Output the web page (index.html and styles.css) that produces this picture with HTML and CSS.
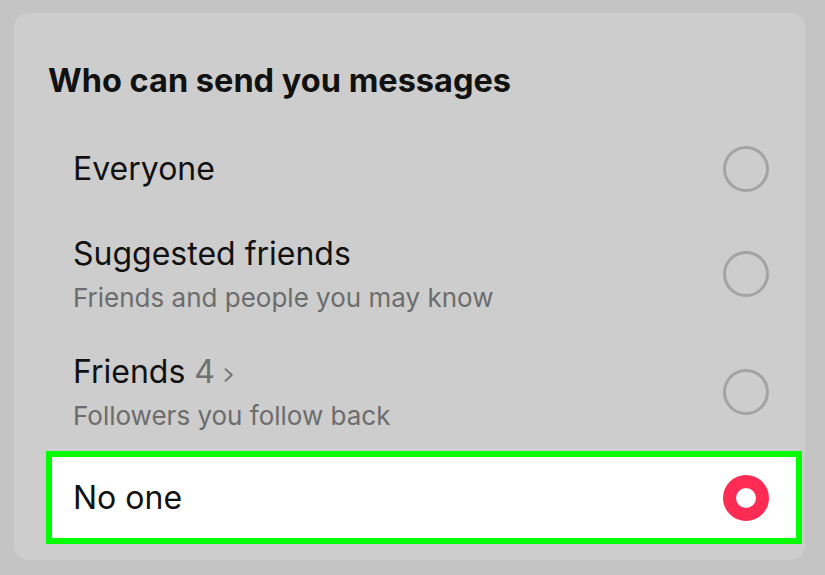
FILE: index.html
```html
<!DOCTYPE html>
<html lang="en">
<head>
    <meta charset="UTF-8">
    <meta name="viewport" content="width=device-width, initial-scale=1.0">
    <title>Messages</title>
    <link rel="stylesheet" href="styles.css">
</head>
<body>
    <div class="sheet">
        <h2 class="sheet-title">Who can send you messages</h2>
        <div class="options">
            <div class="option">
                <div class="option-text">
                    <div class="option-label">Everyone</div>
                </div>
                <div class="radio"></div>
            </div>
            <div class="option">
                <div class="option-text">
                    <div class="option-label">Suggested friends</div>
                    <div class="option-sub">Friends and people you may know</div>
                </div>
                <div class="radio"></div>
            </div>
            <div class="option">
                <div class="option-text">
                    <div class="option-label">Friends <span class="count">4</span><svg class="chevron" width="10" height="14" viewBox="0 0 10 14"><path d="M1.5 1.2 L7.8 7 L1.5 12.8" fill="none" stroke="#707070" stroke-width="1.8" stroke-linecap="round" stroke-linejoin="round"/></svg></div>
                    <div class="option-sub">Followers you follow back</div>
                </div>
                <div class="radio"></div>
            </div>
            <div class="option selected">
                <div class="option-text">
                    <div class="option-label">No one</div>
                </div>
                <div class="radio checked"></div>
            </div>
        </div>
    </div>
</body>
</html>
```

FILE: styles.css
```css
body {
    margin: 0;
    padding: 13px 20px 15px 14px;
    background-color: #c4c4c4;
    font-family: Inter, "Noto Sans", sans-serif;
    color: #111;
}

.sheet {
    background-color: #cdcdcd;
    border-radius: 14px;
    padding: 48px 3px 16px 32px;
}

.sheet-title {
    margin: 0 0 21px 2px;
    font-size: 32.5px;
    line-height: 40px;
    font-weight: 700;
}

.options {
    display: flex;
    flex-direction: column;
}

.option {
    display: flex;
    align-items: center;
    justify-content: space-between;
    min-height: 93px;
    box-sizing: border-box;
    padding: 13px 27px 13px 21px;
    border: 6px solid transparent;
}

.option.selected {
    background-color: #fff;
    border-color: #00ff00;
}

.option-label {
    font-size: 32px;
    line-height: 40px;
}

.count {
    color: #707070;
}

.chevron {
    margin-left: 9px;
    vertical-align: 1px;
}

.option-sub {
    margin-top: 8px;
    font-size: 26px;
    line-height: 32px;
    color: #6c6c6c;
}

.radio {
    width: 46px;
    height: 46px;
    box-sizing: border-box;
    border: 3px solid #a3a3a3;
    border-radius: 50%;
    flex-shrink: 0;
}

.radio.checked {
    border: 13px solid #fe2c55;
    background-color: #fff;
}
```
